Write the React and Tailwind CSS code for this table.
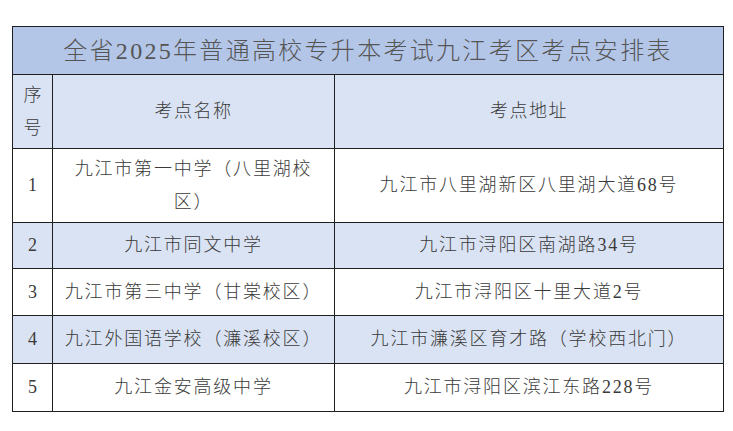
import React from 'react';

const rows = [
  { no: '1', name: '九江市第一中学（八里湖校区）', addr: '九江市八里湖新区八里湖大道68号', h: 'h-[74px]', alt: false },
  { no: '2', name: '九江市同文中学', addr: '九江市浔阳区南湖路34号', h: 'h-[46px]', alt: true },
  { no: '3', name: '九江市第三中学（甘棠校区）', addr: '九江市浔阳区十里大道2号', h: 'h-[47px]', alt: false },
  { no: '4', name: '九江外国语学校（濂溪校区）', addr: '九江市濂溪区育才路（学校西北门）', h: 'h-[48px]', alt: true },
  { no: '5', name: '九江金安高级中学', addr: '九江市浔阳区滨江东路228号', h: 'h-[48px]', alt: false },
];

const cell = 'border border-[#1f1f1f] text-center align-middle';

const App = () => {
  return (
    <div className="min-h-[431px] w-[733px] bg-white pt-[26px] pl-[12px] font-['Liberation_Serif','Noto_Sans_CJK_SC',serif] font-light text-[#3a3a3a]">
      <table className="w-[711px] table-fixed border-collapse">
        <colgroup>
          <col className="w-[40px]" />
          <col className="w-[282px]" />
          <col className="w-[389px]" />
        </colgroup>
        <tbody>
          <tr className="h-[48px] bg-[#b4c6e7]">
            <td colSpan={3} className={`${cell} text-[24px] tracking-[2.3px] text-[#555555]`}>
              全省2025年普通高校专升本考试九江考区考点安排表
            </td>
          </tr>
          <tr className="h-[74px] bg-[#dae3f3] text-[18px] leading-[33px]">
            <td className={`${cell} px-[10px]`}>序号</td>
            <td className={`${cell} tracking-[1.5px]`}>考点名称</td>
            <td className={`${cell} tracking-[1.5px]`}>考点地址</td>
          </tr>
          {rows.map((r) => (
            <tr key={r.no} className={`${r.h} ${r.alt ? 'bg-[#dae3f3]' : 'bg-white'} text-[18px] leading-[33px]`}>
              <td className={cell}>{r.no}</td>
              <td className={`${cell} px-[8px] tracking-[1.8px]`}>{r.name}</td>
              <td className={`${cell} px-[6px] tracking-[1.8px]`}>{r.addr}</td>
            </tr>
          ))}
        </tbody>
      </table>
    </div>
  );
};

export default App;
